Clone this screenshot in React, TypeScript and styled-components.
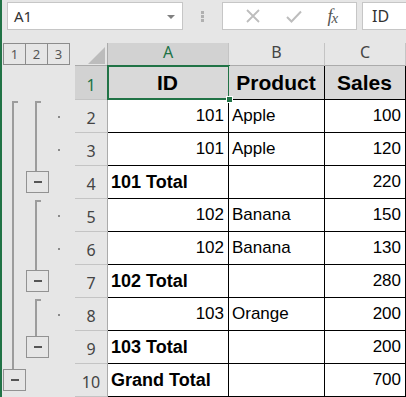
import React from 'react';
import styled, { createGlobalStyle, css } from 'styled-components';

const Global = createGlobalStyle`
  html, body { margin: 0; padding: 0; background: #e6e6e6; }
  body { font-family: "Liberation Sans", Arial, sans-serif; }
`;

const GREEN = '#217346';
const UI_FONT = `"Noto Sans", "Open Sans", sans-serif`;

const Window = styled.div`
  width: 406px;
  height: 397px;
  box-sizing: border-box;
  border-left: 2px solid ${GREEN};
  background: #e6e6e6;
  display: flex;
  flex-direction: column;
  overflow: hidden;
`;

const FormulaBar = styled.div`
  height: 43px;
  flex: none;
  box-sizing: border-box;
  display: flex;
  align-items: flex-start;
  padding: 2px 0 0 5px;
`;

const NameBox = styled.div`
  width: 176px;
  height: 28px;
  box-sizing: border-box;
  background: #fff;
  border: 1px solid #c6c6c6;
  display: flex;
  align-items: center;
  justify-content: space-between;
  padding: 0 7px 0 6px;
  font-family: ${UI_FONT};
  font-size: 15px;
  color: #333;
`;

const Caret = styled.span`
  width: 0;
  height: 0;
  border-left: 4px solid transparent;
  border-right: 4px solid transparent;
  border-top: 4px solid #808080;
  margin-top: 2px;
`;

const Grip = styled.div`
  width: 39px;
  height: 28px;
  display: flex;
  flex-direction: column;
  align-items: center;
  justify-content: center;
  gap: 1px;
`;

const GripDot = styled.span`
  width: 3px;
  height: 3px;
  background: #b0b0b0;
`;

const FxBox = styled.div`
  width: 135px;
  height: 28px;
  box-sizing: border-box;
  background: #fff;
  border: 1px solid #c6c6c6;
  display: flex;
  align-items: center;
  justify-content: space-around;
  padding: 0 6px 0 10px;
`;

const FxText = styled.span`
  font-family: "Liberation Serif", "DejaVu Serif", serif;
  font-style: italic;
  font-size: 18px;
  color: #555;
  letter-spacing: -1px;
  & > span { font-size: 15px; position: relative; top: 1px; }
`;

const FormulaInput = styled.div`
  flex: 1;
  height: 28px;
  margin-left: 5px;
  margin-right: -2px;
  box-sizing: border-box;
  background: #fff;
  border: 1px solid #c6c6c6;
  display: flex;
  align-items: center;
  padding-left: 9px;
  font-family: ${UI_FONT};
  font-size: 16px;
  color: #333;
`;

const Sheet = styled.div`
  display: grid;
  grid-template-columns: 24px 23px 26px 33px 121px 96px 81px;
  grid-template-rows: 23px 34px repeat(9, 33px);
`;

const LevelButtons = styled.div`
  grid-column: 1 / 4;
  grid-row: 1;
  display: flex;
  padding-left: 1px;
`;

const LevelButton = styled.div`
  width: 23px;
  height: 22px;
  box-sizing: border-box;
  border: 1px solid #8c8c8c;
  margin-right: -1px;
  display: flex;
  align-items: center;
  justify-content: center;
  font-family: ${UI_FONT};
  font-size: 13px;
  color: #555;
`;

const Corner = styled.div`
  grid-column: 4;
  grid-row: 1;
  box-sizing: border-box;
  border-right: 1px solid #ababab;
  border-bottom: 1px solid #ababab;
  display: flex;
  align-items: flex-end;
  justify-content: flex-end;
  padding: 0 2px 1px 0;
`;

const CornerTriangle = styled.span`
  width: 0;
  height: 0;
  border-left: 17px solid transparent;
  border-bottom: 17px solid #bcbcbc;
`;

const headerText = css<{ $selected?: boolean }>`
  font-family: ${UI_FONT};
  font-size: 16px;
  color: ${(p) => (p.$selected ? GREEN : '#444')};
  background: ${(p) => (p.$selected ? '#d2d2d2' : '#e6e6e6')};
  box-sizing: border-box;
  display: flex;
  align-items: flex-end;
  line-height: 1;
`;

const ColHeader = styled.div<{ $selected?: boolean; $col: number }>`
  ${headerText};
  grid-row: 1;
  grid-column: ${(p) => p.$col};
  justify-content: center;
  padding-bottom: 5px;
  border-right: 1px solid #c4c4c4;
  border-bottom: 1px solid #ababab;
`;

const RowHeader = styled.div<{ $selected?: boolean; $row: number }>`
  ${headerText};
  grid-column: 4;
  grid-row: ${(p) => p.$row + 1};
  justify-content: center;
  padding-bottom: 6px;
  border-right: 1px solid #ababab;
  border-bottom: 1px solid #c4c4c4;
`;

const Cell = styled.div<{
  $row: number;
  $col: number;
  $align?: 'left' | 'right' | 'center';
  $bold?: boolean;
  $head?: boolean;
  $selected?: boolean;
}>`
  grid-row: ${(p) => p.$row + 1};
  grid-column: ${(p) => p.$col + 4};
  box-sizing: border-box;
  background: ${(p) => (p.$head ? '#d9d9d9' : '#fff')};
  border-right: 1px solid #000;
  border-bottom: 1px solid #000;
  display: flex;
  align-items: center;
  justify-content: ${(p) => (p.$align === 'right' ? 'flex-end' : p.$align === 'center' ? 'center' : 'flex-start')};
  padding: 0 4px 0 3px;
  font-size: ${(p) => (p.$head ? '21px' : p.$bold ? '18px' : '17px')};
  font-weight: ${(p) => (p.$bold || p.$head ? 700 : 400)};
  color: #000;
  white-space: nowrap;
  position: relative;
  ${(p) =>
    p.$selected &&
    css`
      &::after {
        content: '';
        position: absolute;
        left: -1px;
        top: -1px;
        right: -2px;
        bottom: -1px;
        border: 2px solid ${GREEN};
        pointer-events: none;
      }
      &::before {
        content: '';
        position: absolute;
        right: -5px;
        bottom: -4px;
        width: 5px;
        height: 5px;
        background: ${GREEN};
        border: 1px solid #fff;
        z-index: 2;
      }
    `}
`;

const Group = styled.div<{ $col: number; $from: number; $to: number }>`
  grid-column: ${(p) => p.$col};
  grid-row: ${(p) => `${p.$from + 1} / ${p.$to + 2}`};
  display: flex;
  flex-direction: column;
  align-items: flex-start;
  padding-top: 1px;
`;

const GroupLine = styled.div<{ $offset: number }>`
  flex: 1;
  width: 6px;
  margin-left: ${(p) => p.$offset}px;
  box-sizing: border-box;
  border-left: 2px solid #9c9c9c;
  border-top: 2px solid #9c9c9c;
`;

const CollapseButton = styled.div<{ $offset: number }>`
  width: 23px;
  height: 22px;
  box-sizing: border-box;
  margin-left: ${(p) => p.$offset}px;
  margin-bottom: 6px;
  border: 1px solid #929292;
  display: flex;
  align-items: center;
  justify-content: center;
  &::after {
    content: '';
    width: 8px;
    height: 2px;
    background: #555;
  }
`;

const DetailDot = styled.span<{ $row: number }>`
  grid-column: 3;
  grid-row: ${(p) => p.$row + 1};
  align-self: center;
  justify-self: start;
  margin-left: 9px;
  width: 2px;
  height: 2px;
  background: #8a8a8a;
`;

type Row = { n: number; id: string; product: string; sales: string; total?: boolean };

const rows: Row[] = [
  { n: 2, id: '101', product: 'Apple', sales: '100' },
  { n: 3, id: '101', product: 'Apple', sales: '120' },
  { n: 4, id: '101 Total', product: '', sales: '220', total: true },
  { n: 5, id: '102', product: 'Banana', sales: '150' },
  { n: 6, id: '102', product: 'Banana', sales: '130' },
  { n: 7, id: '102 Total', product: '', sales: '280', total: true },
  { n: 8, id: '103', product: 'Orange', sales: '200' },
  { n: 9, id: '103 Total', product: '', sales: '200', total: true },
  { n: 10, id: 'Grand Total', product: '', sales: '700', total: true },
];

export default function App() {
  return (
    <Window>
      <Global />
      <FormulaBar>
        <NameBox>
          <span>A1</span>
          <Caret />
        </NameBox>
        <Grip>
          <GripDot />
          <GripDot />
          <GripDot />
        </Grip>
        <FxBox>
          <svg width="14" height="14" viewBox="0 0 14 14">
            <path d="M1 1 L13 13 M13 1 L1 13" stroke="#bdbdbd" strokeWidth="1.8" fill="none" />
          </svg>
          <svg width="16" height="13" viewBox="0 0 16 13">
            <path d="M1 7 L5.5 11.5 L15 1.5" stroke="#bdbdbd" strokeWidth="2" fill="none" />
          </svg>
          <FxText>
            f<span>x</span>
          </FxText>
        </FxBox>
        <FormulaInput>ID</FormulaInput>
      </FormulaBar>

      <Sheet>
        <LevelButtons>
          <LevelButton>1</LevelButton>
          <LevelButton>2</LevelButton>
          <LevelButton>3</LevelButton>
        </LevelButtons>
        <Corner>
          <CornerTriangle />
        </Corner>
        <ColHeader $col={5} $selected>A</ColHeader>
        <ColHeader $col={6}>B</ColHeader>
        <ColHeader $col={7}>C</ColHeader>

        <RowHeader $row={1} $selected>1</RowHeader>
        <Cell $row={1} $col={1} $head $align="center" $selected>ID</Cell>
        <Cell $row={1} $col={2} $head $align="center">Product</Cell>
        <Cell $row={1} $col={3} $head $align="center">Sales</Cell>

        {rows.map((r) => (
          <React.Fragment key={r.n}>
            <RowHeader $row={r.n}>{r.n}</RowHeader>
            <Cell $row={r.n} $col={1} $align={r.total ? 'left' : 'right'} $bold={r.total}>
              {r.id}
            </Cell>
            <Cell $row={r.n} $col={2}>{r.product}</Cell>
            <Cell $row={r.n} $col={3} $align="right">{r.sales}</Cell>
          </React.Fragment>
        ))}

        <Group $col={1} $from={2} $to={10}>
          <GroupLine $offset={10} />
          <CollapseButton $offset={1} />
        </Group>
        <Group $col={2} $from={2} $to={4}>
          <GroupLine $offset={9} />
          <CollapseButton $offset={0} />
        </Group>
        <Group $col={2} $from={5} $to={7}>
          <GroupLine $offset={9} />
          <CollapseButton $offset={0} />
        </Group>
        <Group $col={2} $from={8} $to={9}>
          <GroupLine $offset={9} />
          <CollapseButton $offset={0} />
        </Group>
        {[2, 3, 5, 6, 8].map((n) => (
          <DetailDot key={n} $row={n} />
        ))}
      </Sheet>
    </Window>
  );
}
